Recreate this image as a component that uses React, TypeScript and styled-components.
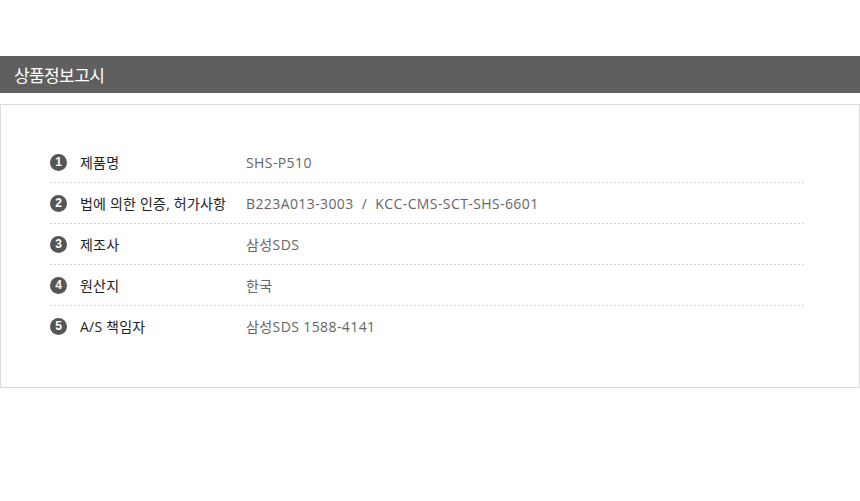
import styled, { createGlobalStyle } from "styled-components";

const GlobalStyle = createGlobalStyle`
  html, body {
    margin: 0;
    padding: 0;
    background: #ffffff;
  }
  body {
    font-family: "Open Sans", "Noto Sans CJK KR", sans-serif;
  }
`;

interface Item {
  label: string;
  value: string;
}

const items: Item[] = [
  { label: "제품명", value: "SHS-P510" },
  { label: "법에 의한 인증, 허가사항", value: "B223A013-3003  /  KCC-CMS-SCT-SHS-6601" },
  { label: "제조사", value: "삼성SDS" },
  { label: "원산지", value: "한국" },
  { label: "A/S 책임자", value: "삼성SDS 1588-4141" },
];

export default function App() {
  return (
    <>
      <GlobalStyle />
      <Page>
        <TitleBar>
          <Title>상품정보고시</Title>
        </TitleBar>
        <Box>
          <List>
            {items.map((item, i) => (
              <Row key={item.label} $last={i === items.length - 1}>
                <Label>
                  <Num>{i + 1}</Num>
                  <LabelText>{item.label}</LabelText>
                </Label>
                <Value>{item.value}</Value>
              </Row>
            ))}
          </List>
        </Box>
      </Page>
    </>
  );
}

const Page = styled.div`
  width: 860px;
  padding-top: 56px;
`;

const TitleBar = styled.div`
  height: 37px;
  background: #5f5f5f;
  display: flex;
  align-items: center;
  padding-left: 14px;
`;

const Title = styled.h2`
  margin: 0;
  font-family: "Noto Sans CJK KR", sans-serif;
  font-size: 17px;
  font-weight: 400;
  letter-spacing: -0.6px;
  color: #ffffff;
`;

const Box = styled.div`
  margin-top: 11px;
  width: 860px;
  box-sizing: border-box;
  border: 1px solid #dcdcdc;
  padding: 37px 53px 40px 49px;
`;

const List = styled.ul`
  list-style: none;
  margin: 0;
  padding: 0;
`;

const Row = styled.li<{ $last: boolean }>`
  height: 41px;
  display: flex;
  align-items: center;
  padding-bottom: 1px;
  box-sizing: border-box;
  background-image: ${(p) =>
    p.$last
      ? "none"
      : "repeating-linear-gradient(to right, #d4d4d4 0 2px, transparent 2px 4px)"};
  background-size: 100% 1px;
  background-position: left bottom;
  background-repeat: no-repeat;
`;

const Label = styled.div`
  width: 196px;
  display: flex;
  align-items: center;
  gap: 13px;
`;

const Num = styled.span`
  width: 17px;
  height: 17px;
  border-radius: 50%;
  background: #555555;
  color: #ffffff;
  font-family: "Liberation Sans", sans-serif;
  font-size: 12px;
  font-weight: 700;
  display: flex;
  align-items: center;
  justify-content: center;
  flex-shrink: 0;
`;

const LabelText = styled.span`
  font-family: "Open Sans", "Noto Sans CJK KR", sans-serif;
  font-size: 14px;
  letter-spacing: 0.2px;
  color: #222222;
`;

const Value = styled.span`
  font-family: "Open Sans", "Noto Sans CJK KR", sans-serif;
  font-size: 14px;
  letter-spacing: 0.4px;
  color: #666666;
  white-space: pre;
`;
